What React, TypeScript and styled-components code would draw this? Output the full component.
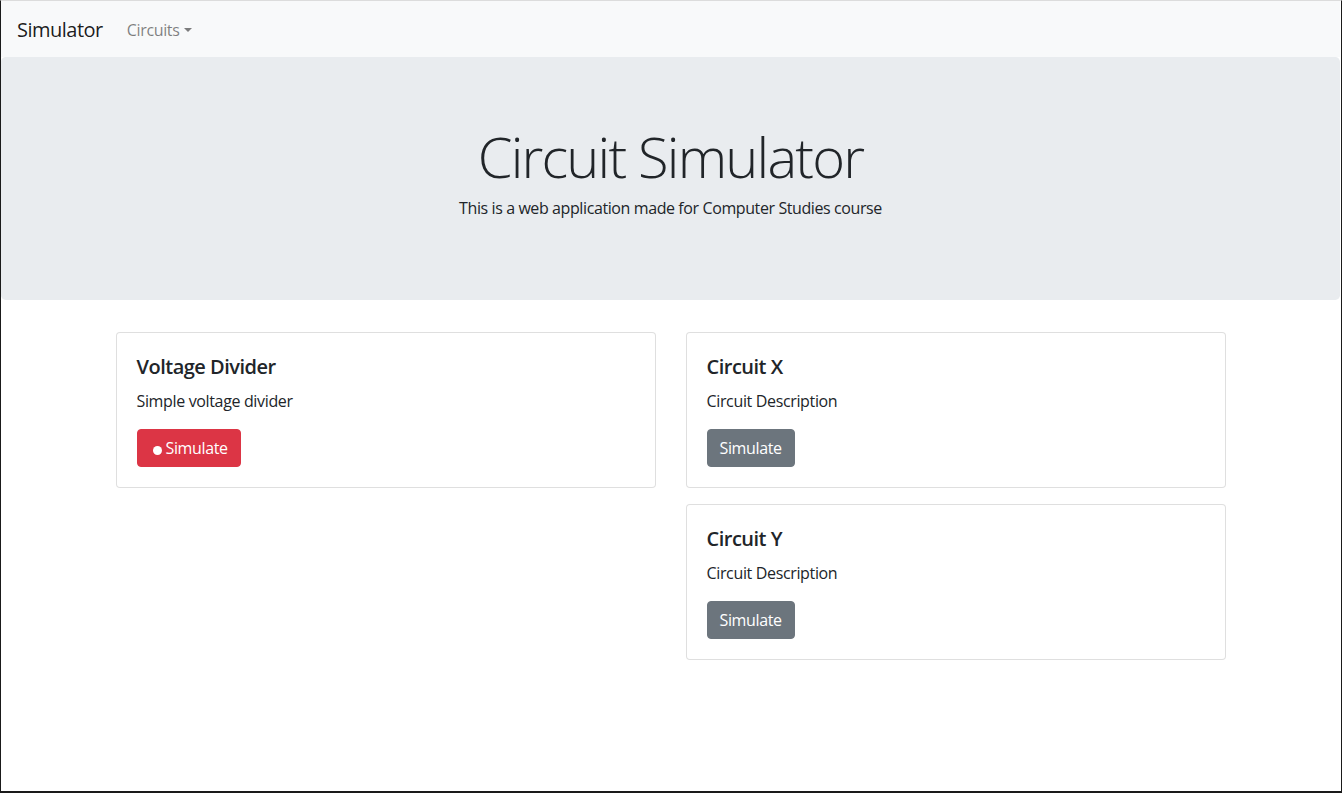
import React from "react";
import styled, { createGlobalStyle } from "styled-components";

const Global = createGlobalStyle`
  * { box-sizing: border-box; }
  html, body { margin: 0; padding: 0; background: #fff; }
  body {
    font-family: "Segoe UI", "Open Sans", "Noto Sans", Arial, sans-serif;
    font-size: 16px;
    line-height: 1.5;
    color: #212529;
    letter-spacing: -0.35px;
  }
`;

const Frame = styled.div`
  width: 1342px;
  height: 793px;
  border-top: 1px solid #dcdcdc;
  border-left: 1px solid #1a1a1a;
  border-right: 1px solid #1a1a1a;
  border-bottom: 2px solid #1a1a1a;
  padding-right: 1px;
  overflow: hidden;
`;

const Navbar = styled.nav`
  display: flex;
  align-items: center;
  padding: 9px 16px 7px;
  background: #f8f9fa;
`;

const Brand = styled.a`
  font-size: 20px;
  line-height: 30px;
  padding: 5px 0;
  margin-right: 16px;
  color: rgba(0, 0, 0, 0.9);
  text-decoration: none;
  letter-spacing: -0.5px;
`;

const NavLink = styled.a`
  padding: 8px;
  color: rgba(0, 0, 0, 0.5);
  text-decoration: none;
  line-height: 24px;
`;

const Caret = styled.span`
  display: inline-block;
  margin-left: 0.255em;
  vertical-align: 0.255em;
  border-top: 0.3em solid;
  border-right: 0.3em solid transparent;
  border-left: 0.3em solid transparent;
`;

const Jumbotron = styled.header`
  background: #e9ecef;
  border-radius: 4.8px;
  padding: 64px 32px;
  margin-bottom: 32px;
  text-align: center;
`;

const Display = styled.h1`
  margin: 0 0 8px;
  font-size: 56px;
  font-weight: 300;
  line-height: 1.2;
  letter-spacing: -1.8px;
  padding-top: 2px;
  margin-bottom: 6px;
`;

const Lead = styled.p`
  margin: 0 0 16px;
  letter-spacing: -0.4px;
`;

const Container = styled.main`
  max-width: 1140px;
  margin: 0 auto;
  padding: 0 15px;
`;

const Row = styled.div`
  display: grid;
  grid-template-columns: 1fr 1fr;
  column-gap: 30px;
  align-items: start;
`;

const Column = styled.div`
  display: flex;
  flex-direction: column;
  gap: 16px;
`;

const Card = styled.div`
  border: 1px solid rgba(0, 0, 0, 0.125);
  border-radius: 4px;
  padding: 20px;
  background: #fff;
`;

const CardTitle = styled.h5`
  margin: 0 0 12px;
  padding-top: 2px;
  margin-bottom: 10px;
  font-size: 20px;
  font-weight: 600;
  line-height: 1.2;
  letter-spacing: -0.5px;
`;

const CardText = styled.p`
  margin: 0 0 16px;
`;

const Button = styled.button<{ $variant: "danger" | "secondary" }>`
  display: inline-flex;
  align-items: center;
  font-family: inherit;
  font-size: 16px;
  line-height: 1.5;
  letter-spacing: -0.35px;
  padding: 6px 12px;
  border: 1px solid ${(p) => (p.$variant === "danger" ? "#dc3545" : "#6c757d")};
  border-radius: 4px;
  color: #fff;
  background: ${(p) => (p.$variant === "danger" ? "#dc3545" : "#6c757d")};
  cursor: pointer;
`;

const Spinner = styled.span`
  display: inline-flex;
  width: 16px;
  height: 16px;
  align-items: center;
  justify-content: center;
  margin-top: 4px;
  &::before {
    content: "";
    width: 9px;
    height: 9px;
    border-radius: 50%;
    background: #fff;
  }
`;

const circuits = [
  { title: "Circuit X", text: "Circuit Description" },
  { title: "Circuit Y", text: "Circuit Description" },
];

export default function App() {
  return (
    <>
      <Global />
      <Frame>
        <Navbar>
          <Brand href="#">Simulator</Brand>
          <NavLink href="#">
            Circuits
            <Caret />
          </NavLink>
        </Navbar>
        <Jumbotron>
          <Display>Circuit Simulator</Display>
          <Lead>This is a web application made for Computer Studies course</Lead>
        </Jumbotron>
        <Container>
          <Row>
            <Column>
              <Card>
                <CardTitle>Voltage Divider</CardTitle>
                <CardText>Simple voltage divider</CardText>
                <Button $variant="danger">
                  <Spinner />
                  Simulate
                </Button>
              </Card>
            </Column>
            <Column>
              {circuits.map((c) => (
                <Card key={c.title}>
                  <CardTitle>{c.title}</CardTitle>
                  <CardText>{c.text}</CardText>
                  <Button $variant="secondary">Simulate</Button>
                </Card>
              ))}
            </Column>
          </Row>
        </Container>
      </Frame>
    </>
  );
}
